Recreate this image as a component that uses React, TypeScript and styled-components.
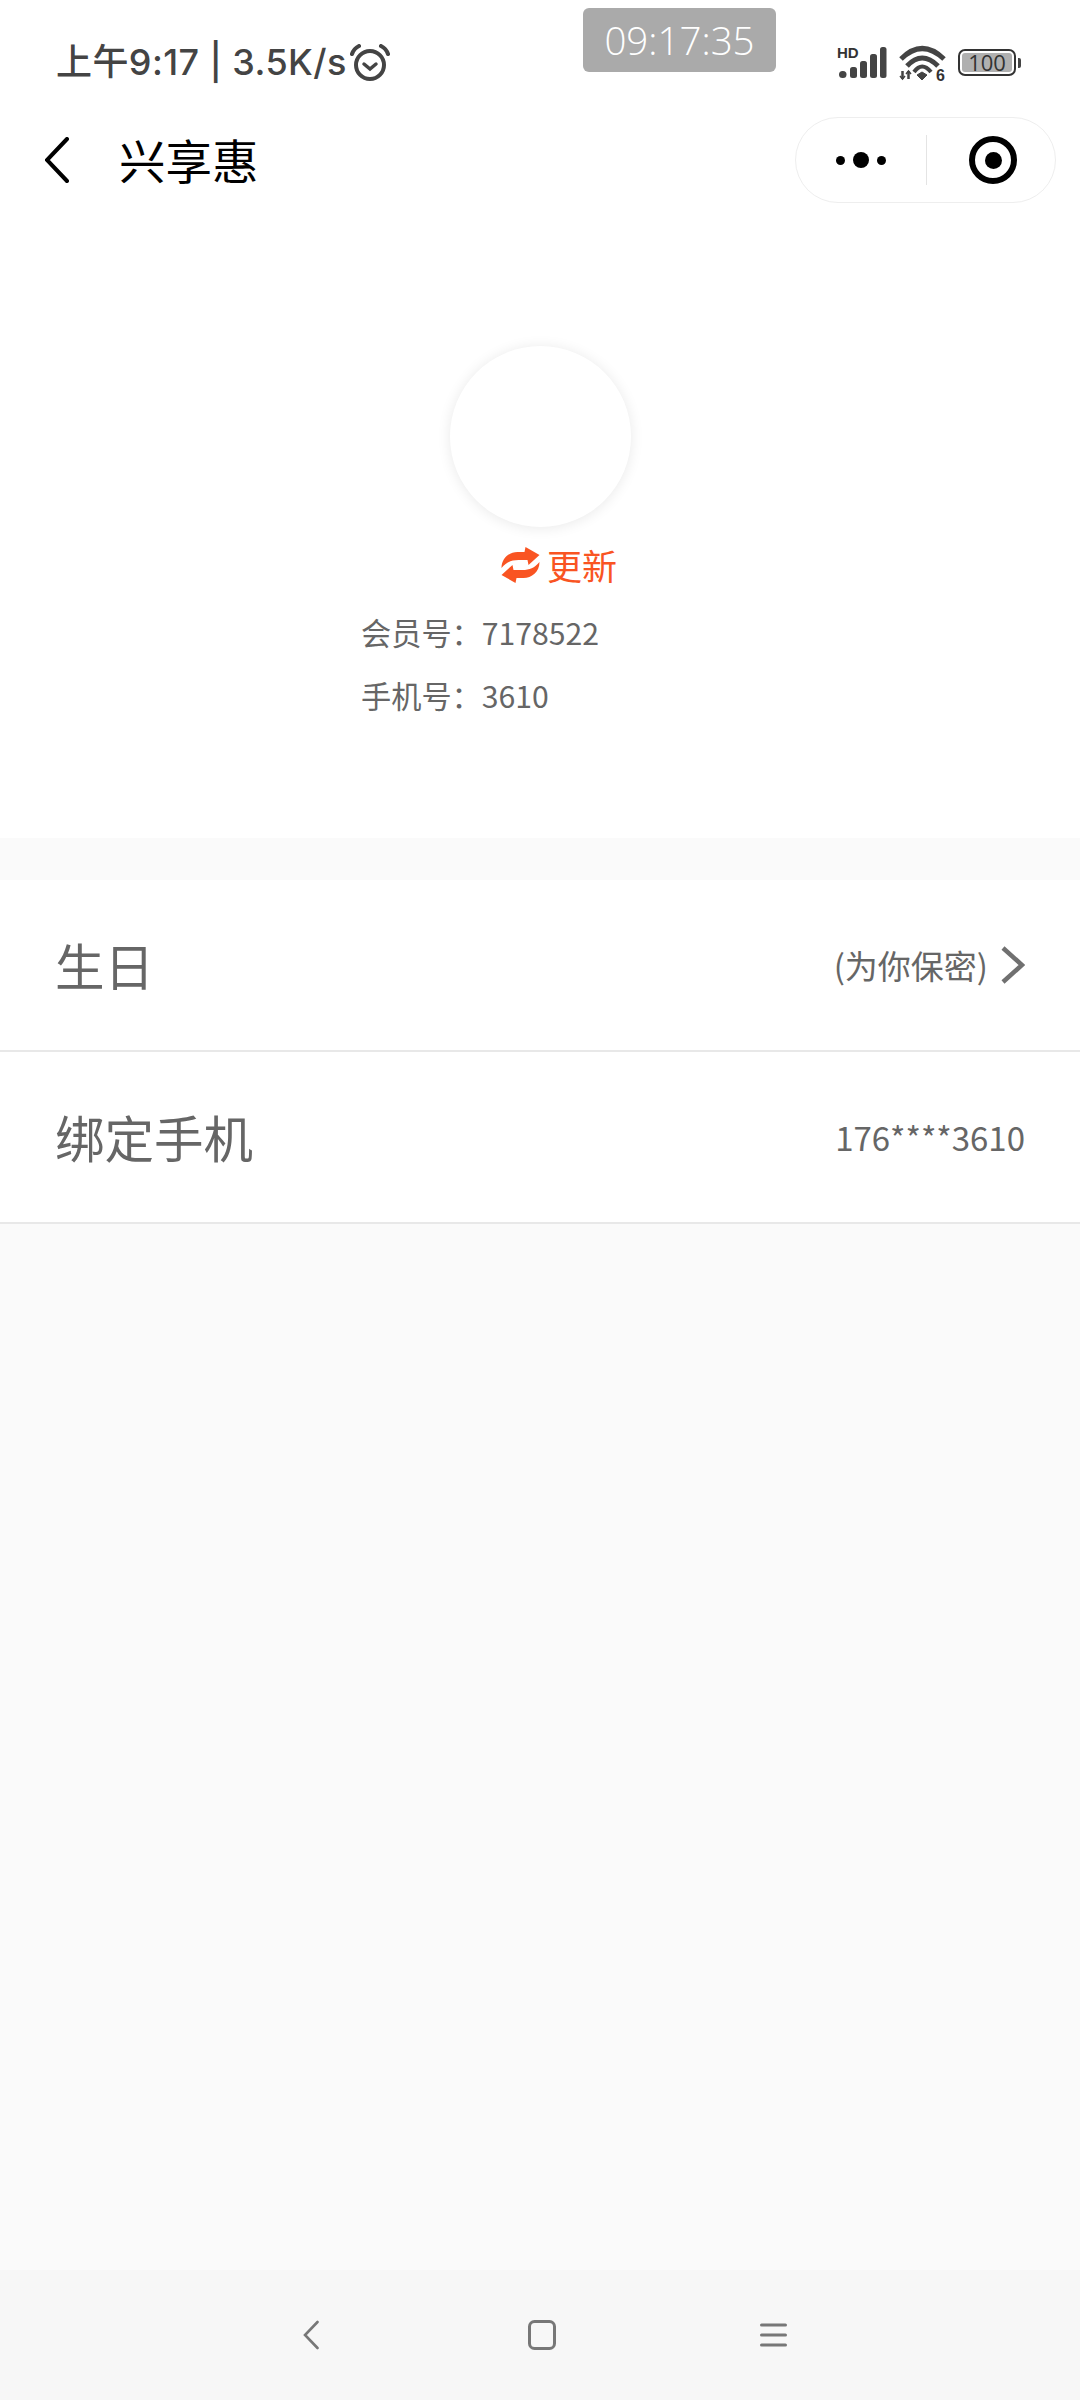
import styled, { createGlobalStyle } from "styled-components";

const GlobalStyle = createGlobalStyle`
  html, body {
    margin: 0;
    padding: 0;
    background: #fafafa;
  }
  * {
    box-sizing: border-box;
  }
`;

const Page = styled.div`
  position: relative;
  width: 1080px;
  height: 2400px;
  display: flex;
  flex-direction: column;
  background: #fafafa;
  font-family: "Noto Sans CJK SC", "Noto Sans", sans-serif;
  overflow: hidden;
`;

const Top = styled.div`
  background: #fff;
  height: 838px;
  display: flex;
  flex-direction: column;
`;

const StatusBar = styled.div`
  height: 117px;
  display: flex;
  justify-content: space-between;
  padding: 40px 59px 0 56px;
`;

const StatusLeft = styled.div`
  display: flex;
  height: 44px;
  align-items: center;
  color: #444;
  font-family: Inter, "Noto Sans CJK SC", sans-serif;
  font-size: 36px;
  font-weight: 500;
  letter-spacing: 0.4px;
  line-height: 44px;
`;

const StatusRight = styled.div`
  display: flex;
  height: 44px;
  margin-top: 6px;
  gap: 12px;
  align-items: flex-start;
`;

const StatusSvg = styled.svg`
  overflow: visible;
`;

const AlarmIcon = styled.svg`
  margin-left: 3px;
  margin-top: 2px;
`;

const TimerBadge = styled.div`
  position: absolute;
  left: 583px;
  top: 8px;
  width: 193px;
  height: 64px;
  border-radius: 6px;
  background: #aaa;
  color: #fff;
  font-family: "Open Sans", sans-serif;
  font-size: 38.5px;
  font-weight: 300;
  line-height: 64px;
  text-align: center;
`;

const BatteryBox = styled.div`
  display: flex;
  align-items: center;
  margin-top: 3px;
`;

const BatteryBody = styled.div`
  width: 58px;
  height: 27px;
  border: 2.5px solid #333;
  border-radius: 7px;
  padding: 2px;
  display: flex;
`;

const BatteryFill = styled.div`
  flex: 1;
  background: #b0b0b0;
  border-radius: 3px;
  color: #333;
  font-family: "Open Sans", sans-serif;
  font-size: 22px;
  line-height: 18px;
  text-align: center;
`;

const BatteryTip = styled.div`
  width: 3px;
  height: 10px;
  margin-left: 2px;
  background: #444;
  border-radius: 0 2px 2px 0;
`;

const NavBar = styled.div`
  height: 86px;
  padding: 0 24px 0 45px;
  display: flex;
  align-items: center;
`;

const NavTitle = styled.div`
  margin: -2px 0 0 50px;
  color: #000;
  font-size: 46.5px;
  line-height: 60px;
`;

const Capsule = styled.div`
  margin-left: auto;
  width: 261px;
  height: 86px;
  border: 1.5px solid #eeeeee;
  border-radius: 43px;
  display: flex;
  align-items: center;
  padding-left: 40px;
`;

const Dots = styled.div`
  width: 90px;
  display: flex;
  align-items: center;
  gap: 8px;
`;

const Dot = styled.span<{ $size: number }>`
  width: ${(p) => p.$size}px;
  height: ${(p) => p.$size}px;
  border-radius: 50%;
  background: #000;
`;

const CapsuleDivider = styled.div`
  width: 1px;
  height: 50px;
  background: #e4e4e4;
`;

const TargetRing = styled.div`
  margin-left: 42px;
  width: 48px;
  height: 48px;
  border: 6px solid #000;
  border-radius: 50%;
  display: flex;
  align-items: center;
  justify-content: center;
`;

const TargetCore = styled.div`
  width: 17px;
  height: 17px;
  background: #000;
  border-radius: 50%;
`;

const Profile = styled.div`
  padding-top: 143px;
  display: flex;
  flex-direction: column;
`;

const Avatar = styled.div`
  width: 181px;
  height: 181px;
  margin-left: 450px;
  border-radius: 50%;
  background: #fff;
  box-shadow: 0 1px 14px rgba(0, 0, 0, 0.09);
`;

const UpdateRow = styled.div`
  margin: 16px 0 0 501px;
  display: flex;
  align-items: center;
  gap: 7px;
  color: #f95422;
  font-size: 35px;
  line-height: 44px;
`;

const InfoList = styled.div`
  margin: 24px 0 0 361px;
  display: flex;
  flex-direction: column;
  gap: 21px;
`;

const InfoLine = styled.div`
  color: #666;
  font-size: 30.2px;
  line-height: 42px;
`;

const RowList = styled.div`
  margin-top: 42px;
`;

const Row = styled.div`
  height: 172px;
  background: #fff;
  border-bottom: 2px solid #e8e8e8;
  padding: 0 55px 0 55px;
  display: flex;
  align-items: center;
  justify-content: space-between;
`;

const RowLabel = styled.div`
  color: #666;
  font-size: 49.5px;
  line-height: 60px;
`;

const RowValue = styled.div`
  display: flex;
  align-items: center;
  gap: 13px;
  color: #666;
  font-size: 33px;
  line-height: 44px;
`;

const Spacer = styled.div`
  flex: 1;
`;

const SystemBar = styled.div`
  height: 130px;
  background: #f7f7f7;
  display: grid;
  grid-template-columns: 225px 232px 27px;
  align-items: center;
  padding-left: 303px;
`;

const BackIcon = () => (
  <svg width="24" height="46" viewBox="0 0 24 46" fill="none">
    <path d="M22 2 L2 23 L22 44" stroke="#000" strokeWidth="4" strokeLinecap="round" strokeLinejoin="miter" />
  </svg>
);

const Alarm = () => (
  <AlarmIcon width="40" height="38" viewBox="0 0 40 38" fill="none" stroke="#444">
    <circle cx="20" cy="21" r="14" strokeWidth="4" />
    <path d="M14 20 L20 25 L26 20" strokeWidth="3.5" strokeLinecap="round" />
    <path d="M2 10 C3 7 5 4 9 2 M38 10 C37 7 35 4 31 2" strokeWidth="4" strokeLinecap="round" />
  </AlarmIcon>
);

const SignalIcon = () => (
  <StatusSvg width="50" height="34" viewBox="0 0 50 34" fill="#444">
    <text x="0" y="12" fontFamily="Liberation Sans" fontSize="15" fontWeight="700" fill="#333">HD</text>
    <rect x="2" y="25" width="7.5" height="7" rx="3.5" />
    <rect x="13" y="21" width="7" height="11" rx="2.5" />
    <rect x="23" y="15" width="7" height="17" rx="2.5" />
    <rect x="33" y="8" width="7" height="24" rx="2.5" />
    <rect x="43" y="1" width="6.5" height="31" rx="2.5" />
  </StatusSvg>
);

const WifiIcon = () => (
  <StatusSvg width="47" height="36" viewBox="0 0 47 36" fill="none" stroke="#444">
    <path d="M2 13 Q23 -8 45 13" strokeWidth="5" />
    <path d="M8 20 Q23 4 39 20" strokeWidth="5" />
    <path d="M15 26 Q23 15 32 26" strokeWidth="4" />
    <path d="M18 29 L23 26 L28 29 L23 34Z" fill="#444" strokeWidth="1" />
    <path d="M3.5 25 V33 M9.5 25 V33" strokeWidth="2.5" />
    <path d="M1 30 L3.5 33 L6 30 M7 28 L9.5 25 L12 28" strokeWidth="1.5" />
    <text x="37" y="35" fontFamily="Liberation Sans" fontSize="16" fontWeight="700" fill="#333" stroke="none">6</text>
  </StatusSvg>
);

const RefreshIcon = () => (
  <svg width="39" height="36" viewBox="0 0 38 36" fill="#f95422">
    <path d="M0 21 C0 11 8 5 16 5 H23 L24 0 L38 8 L27 18 L26 13 H17 C10 13 5 15 0 21Z" />
    <path d="M0 21 C0 11 8 5 16 5 H23 L24 0 L38 8 L27 18 L26 13 H17 C10 13 5 15 0 21Z" transform="rotate(180 19 18)" />
  </svg>
);

const ChevronIcon = () => (
  <svg width="24" height="38" viewBox="0 0 24 38" fill="none">
    <path d="M2 2 L21 19 L2 36" stroke="#707070" strokeWidth="4.5" />
  </svg>
);

const SysBack = () => (
  <svg width="16" height="30" viewBox="0 0 16 30" fill="none">
    <path d="M14.5 2 L2 15 L14.5 28" stroke="#777" strokeWidth="2.6" strokeLinecap="round" />
  </svg>
);

const SysHome = () => (
  <svg width="28" height="30" viewBox="0 0 28 30" fill="none">
    <rect x="1.5" y="1.5" width="25" height="27" rx="5" stroke="#777" strokeWidth="3" />
  </svg>
);

const SysMenu = () => (
  <svg width="27" height="26" viewBox="0 0 27 26" fill="none">
    <path d="M1.5 3 H25.5 M1.5 13 H25.5 M1.5 23 H25.5" stroke="#777" strokeWidth="3" strokeLinecap="round" />
  </svg>
);

export default function App() {
  return (
    <>
      <GlobalStyle />
      <Page>
        <TimerBadge>09:17:35</TimerBadge>
        <Top>
          <StatusBar>
            <StatusLeft>
              上午9:17 | 3.5K/s
              <Alarm />
            </StatusLeft>
            <StatusRight>
              <SignalIcon />
              <WifiIcon />
              <BatteryBox>
                <BatteryBody>
                  <BatteryFill>100</BatteryFill>
                </BatteryBody>
                <BatteryTip />
              </BatteryBox>
            </StatusRight>
          </StatusBar>
          <NavBar>
            <BackIcon />
            <NavTitle>兴享惠</NavTitle>
            <Capsule>
              <Dots>
                <Dot $size={9} />
                <Dot $size={16} />
                <Dot $size={9} />
              </Dots>
              <CapsuleDivider />
              <TargetRing>
                <TargetCore />
              </TargetRing>
            </Capsule>
          </NavBar>
          <Profile>
            <Avatar />
            <UpdateRow>
              <RefreshIcon />
              更新
            </UpdateRow>
            <InfoList>
              <InfoLine>会员号：7178522</InfoLine>
              <InfoLine>手机号：3610</InfoLine>
            </InfoList>
          </Profile>
        </Top>
        <RowList>
          <Row>
            <RowLabel>生日</RowLabel>
            <RowValue>
              (为你保密)
              <ChevronIcon />
            </RowValue>
          </Row>
          <Row>
            <RowLabel>绑定手机</RowLabel>
            <RowValue>176****3610</RowValue>
          </Row>
        </RowList>
        <Spacer />
        <SystemBar>
          <SysBack />
          <SysHome />
          <SysMenu />
        </SystemBar>
      </Page>
    </>
  );
}
